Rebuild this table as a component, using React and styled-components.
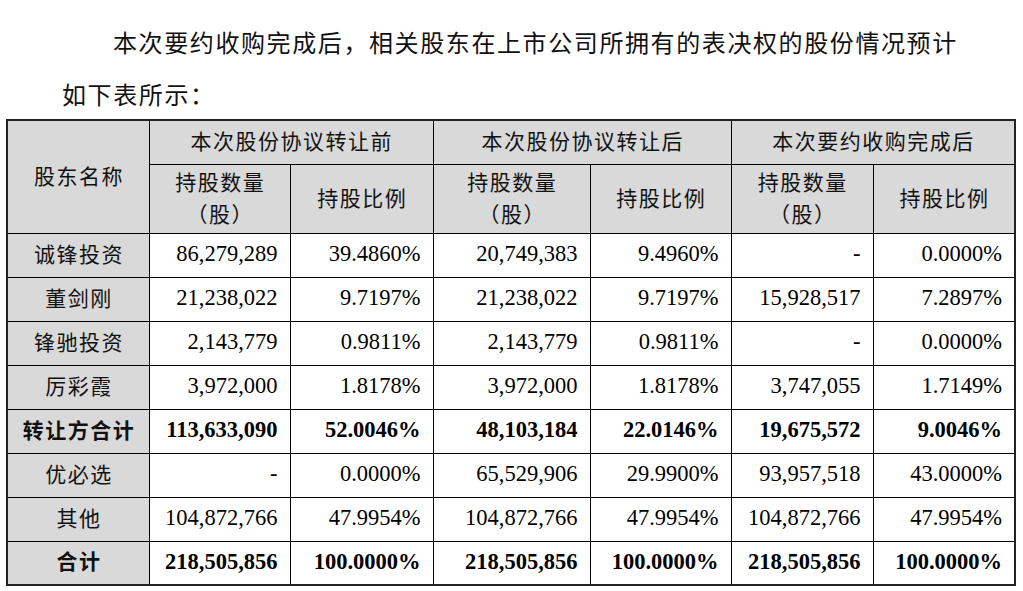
import React from 'react';
import styled, { createGlobalStyle } from 'styled-components';

const GlobalStyle = createGlobalStyle`
  body {
    margin: 0;
    background: #ffffff;
  }
`;

const Page = styled.div`
  width: 1023px;
  padding: 16px 0 0 6px;
`;

const Intro = styled.p`
  margin: 0 0 -1px 56px;
  width: 900px;
  font-family: "Noto Sans CJK SC", sans-serif;
  font-size: 24px;
  line-height: 52px;
  letter-spacing: 1.6px;
  text-indent: 51px;
  color: #111;
`;

const Table = styled.table`
  border-collapse: collapse;
  table-layout: fixed;
  width: 1008px;
  border: 2px solid #222;
  font-family: "Liberation Serif", "Noto Sans CJK SC", serif;
  color: #000;
`;

const HeadRow = styled.tr`
  height: ${p => p.$h}px;
`;

const BodyRow = styled.tr`
  height: 44px;
`;

const HeadCell = styled.th`
  background: #d9d9d9;
  border: 1px solid #000;
  font-family: "Noto Sans CJK SC", sans-serif;
  font-weight: 400;
  font-size: 21px;
  letter-spacing: 1.5px;
  line-height: 32px;
  text-align: center;
  padding: 0 0 4px 1.5px;
  color: #111;
`;

const NameCell = styled.th`
  background: #d9d9d9;
  border: 1px solid #000;
  font-family: "Noto Sans CJK SC", sans-serif;
  font-weight: ${p => (p.$bold ? 700 : 400)};
  font-size: 21px;
  letter-spacing: 1.5px;
  line-height: 30px;
  text-align: center;
  padding: 0 0 5px 1.5px;
  color: #111;
`;

const NumCell = styled.td`
  border: 1px solid #000;
  font-size: 22.5px;
  line-height: 30px;
  font-weight: ${p => (p.$bold ? 700 : 400)};
  text-align: right;
  padding: 0 12px 2px 0;
  white-space: nowrap;
`;

const widths = [142, 141, 143, 157, 141, 142, 142];

const groups = ['本次股份协议转让前', '本次股份协议转让后', '本次要约收购完成后'];

const rows = [
  { name: '诚锋投资', v: ['86,279,289', '39.4860%', '20,749,383', '9.4960%', '-', '0.0000%'] },
  { name: '董剑刚', v: ['21,238,022', '9.7197%', '21,238,022', '9.7197%', '15,928,517', '7.2897%'] },
  { name: '锋驰投资', v: ['2,143,779', '0.9811%', '2,143,779', '0.9811%', '-', '0.0000%'] },
  { name: '厉彩霞', v: ['3,972,000', '1.8178%', '3,972,000', '1.8178%', '3,747,055', '1.7149%'] },
  { name: '转让方合计', bold: true, v: ['113,633,090', '52.0046%', '48,103,184', '22.0146%', '19,675,572', '9.0046%'] },
  { name: '优必选', v: ['-', '0.0000%', '65,529,906', '29.9900%', '93,957,518', '43.0000%'] },
  { name: '其他', v: ['104,872,766', '47.9954%', '104,872,766', '47.9954%', '104,872,766', '47.9954%'] },
  { name: '合计', bold: true, v: ['218,505,856', '100.0000%', '218,505,856', '100.0000%', '218,505,856', '100.0000%'] },
];

export default function App() {
  return (
    <Page>
      <GlobalStyle />
      <Intro>
        本次要约收购完成后，相关股东在上市公司所拥有的表决权的股份情况预计如下表所示：
      </Intro>
      <Table>
        <colgroup>
          {widths.map((w, i) => <col key={i} style={{ width: w }} />)}
        </colgroup>
        <thead>
          <HeadRow $h={44}>
            <HeadCell rowSpan={2}>股东名称</HeadCell>
            {groups.map(g => <HeadCell key={g} colSpan={2}>{g}</HeadCell>)}
          </HeadRow>
          <HeadRow $h={69}>
            {groups.map(g => (
              <React.Fragment key={g}>
                <HeadCell>持股数量<br />（股）</HeadCell>
                <HeadCell>持股比例</HeadCell>
              </React.Fragment>
            ))}
          </HeadRow>
        </thead>
        <tbody>
          {rows.map(r => (
            <BodyRow key={r.name}>
              <NameCell $bold={r.bold}>{r.name}</NameCell>
              {r.v.map((x, i) => <NumCell key={i} $bold={r.bold}>{x}</NumCell>)}
            </BodyRow>
          ))}
        </tbody>
      </Table>
    </Page>
  );
}
